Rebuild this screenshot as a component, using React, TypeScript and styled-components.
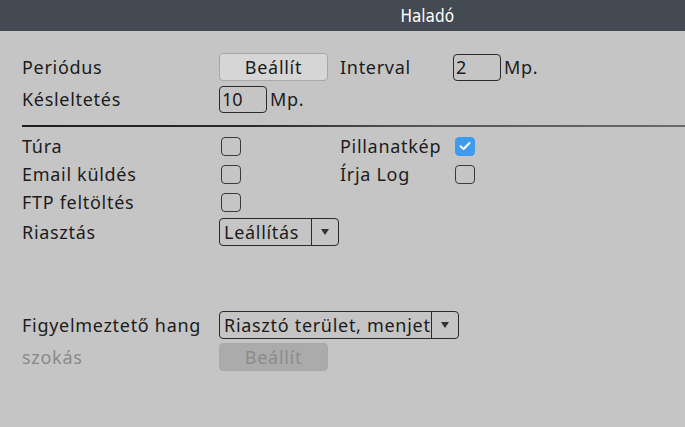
import React from "react";
import styled, { createGlobalStyle } from "styled-components";

const Global = createGlobalStyle`
  html, body { margin: 0; padding: 0; }
  body {
    background: #c5c5c5;
    font-family: "Noto Sans", "Open Sans", sans-serif;
    color: #1c1c1c;
  }
`;

const Page = styled.div`
  width: 685px;
  height: 427px;
  background: #c5c5c5;
  display: flex;
  flex-direction: column;
  overflow: hidden;
`;

const Header = styled.div`
  height: 31px;
  background: #434a52;
  display: flex;
  align-items: center;
  justify-content: flex-end;
  padding-right: 231px;
`;

const Title = styled.span`
  color: #ffffff;
  font-family: "DejaVu Sans Condensed", "DejaVu Sans", sans-serif;
  font-stretch: condensed;
  font-size: 17px;
  font-weight: 500;
`;

const Body = styled.div`
  display: flex;
  flex-direction: column;
  padding: 20px 0 0 22px;
`;

const Row = styled.div<{ $h: number; $mt?: number }>`
  display: grid;
  grid-template-columns: 197px 121px 113px 1fr;
  align-items: center;
  height: ${(p) => p.$h}px;
  margin-top: ${(p) => p.$mt ?? 0}px;
`;

const Label = styled.span<{ $muted?: boolean }>`
  font-size: 18px;
  letter-spacing: 0.7px;
  color: ${(p) => (p.$muted ? "#8a8a8a" : "#1c1c1c")};
  white-space: nowrap;
`;

const Button = styled.div<{ $disabled?: boolean }>`
  width: 109px;
  height: 28px;
  box-sizing: border-box;
  border-radius: 4px;
  border: 1px solid ${(p) => (p.$disabled ? "#a9a9a9" : "#a8a8a8")};
  background: ${(p) => (p.$disabled ? "#ababab" : "#d6d6d6")};
  color: ${(p) => (p.$disabled ? "#8b8b8b" : "#1c1c1c")};
  font-size: 18px;
  letter-spacing: 0.7px;
  display: flex;
  align-items: center;
  justify-content: center;
`;

const Field = styled.div`
  display: flex;
  align-items: center;
  gap: 3px;
`;

const Input = styled.div<{ $w: number }>`
  width: ${(p) => p.$w}px;
  height: 27px;
  box-sizing: border-box;
  border: 1px solid #2a2a2a;
  border-radius: 4px;
  font-size: 18px;
  padding-left: 2px;
  display: flex;
  align-items: center;
`;

const Divider = styled.div`
  height: 2px;
  margin: 10px 0 5px 0;
  background: linear-gradient(to right, #1e1e1e 0%, #2a2a2a 35%, #555 60%, #6a6a6a 100%);
`;

const Box = styled.div<{ $checked?: boolean }>`
  width: 20px;
  height: 19px;
  margin-left: 2px;
  box-sizing: border-box;
  border-radius: 4px;
  border: 1px solid ${(p) => (p.$checked ? "#3d9cf0" : "#3a3a3a")};
  background: ${(p) => (p.$checked ? "#3d9cf0" : "transparent")};
  display: flex;
  align-items: center;
  justify-content: center;
`;

const Select = styled.div<{ $w: number }>`
  width: ${(p) => p.$w}px;
  height: 28px;
  box-sizing: border-box;
  border: 1px solid #2a2a2a;
  border-radius: 4px;
  display: flex;
  align-items: stretch;
  grid-column: span 3;
`;

const SelectText = styled.div`
  flex: 1;
  min-width: 0;
  overflow: hidden;
  white-space: nowrap;
  font-size: 18px;
  letter-spacing: 0.7px;
  padding-left: 4px;
  display: flex;
  align-items: center;
`;

const Arrow = styled.div`
  width: 26px;
  flex-shrink: 0;
  border-left: 1px solid #2a2a2a;
  display: flex;
  align-items: center;
  justify-content: center;
  &::after {
    content: "";
    border-left: 4px solid transparent;
    border-right: 4px solid transparent;
    border-top: 6px solid #333;
  }
`;

const Check = () => (
  <svg width="12" height="10" viewBox="0 0 12 10">
    <path d="M1.5 5.2 L4.6 8 L10.5 2" stroke="#fff" strokeWidth="2" fill="none" strokeLinecap="round" strokeLinejoin="round" />
  </svg>
);

export default function App() {
  return (
    <Page>
      <Global />
      <Header>
        <Title>Haladó</Title>
      </Header>
      <Body>
        <Row $h={32}>
          <Label>Periódus</Label>
          <Button>Beállít</Button>
          <Label>Interval</Label>
          <Field>
            <Input $w={48}>2</Input>
            <Label>Mp.</Label>
          </Field>
        </Row>
        <Row $h={32}>
          <Label>Késleltetés</Label>
          <Field>
            <Input $w={48}>10</Input>
            <Label>Mp.</Label>
          </Field>
        </Row>
        <Divider />
        <Row $h={28}>
          <Label>Túra</Label>
          <Box />
          <Label>Pillanatkép</Label>
          <Box $checked>
            <Check />
          </Box>
        </Row>
        <Row $h={28}>
          <Label>Email küldés</Label>
          <Box />
          <Label>Írja Log</Label>
          <Box />
        </Row>
        <Row $h={28}>
          <Label>FTP feltöltés</Label>
          <Box />
        </Row>
        <Row $h={28} $mt={2}>
          <Label>Riasztás</Label>
          <Select $w={120}>
            <SelectText>Leállítás</SelectText>
            <Arrow />
          </Select>
        </Row>
        <Row $h={28} $mt={65}>
          <Label>Figyelmeztető hang</Label>
          <Select $w={240}>
            <SelectText>Riasztó terület, menjetek el</SelectText>
            <Arrow />
          </Select>
        </Row>
        <Row $h={30} $mt={3}>
          <Label $muted>szokás</Label>
          <Button $disabled>Beállít</Button>
        </Row>
      </Body>
    </Page>
  );
}
